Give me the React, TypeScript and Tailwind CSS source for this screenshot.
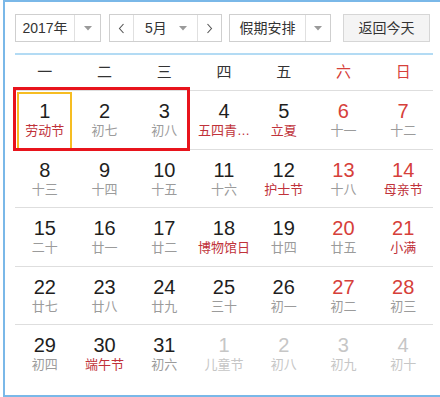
import React from "react";

const FONT = { fontFamily: '"Liberation Sans", Arial, "Noto Sans CJK SC", sans-serif' };

type Cell = { d: number; l: string; numRed?: boolean; lunarRed?: boolean; dim?: boolean };

const rows: Cell[][] = [
  [
    { d: 1, l: "劳动节", lunarRed: true },
    { d: 2, l: "初七" },
    { d: 3, l: "初八" },
    { d: 4, l: "五四青…", lunarRed: true },
    { d: 5, l: "立夏", lunarRed: true },
    { d: 6, l: "十一", numRed: true },
    { d: 7, l: "十二", numRed: true },
  ],
  [
    { d: 8, l: "十三" },
    { d: 9, l: "十四" },
    { d: 10, l: "十五" },
    { d: 11, l: "十六" },
    { d: 12, l: "护士节", lunarRed: true },
    { d: 13, l: "十八", numRed: true },
    { d: 14, l: "母亲节", numRed: true, lunarRed: true },
  ],
  [
    { d: 15, l: "二十" },
    { d: 16, l: "廿一" },
    { d: 17, l: "廿二" },
    { d: 18, l: "博物馆日", lunarRed: true },
    { d: 19, l: "廿四" },
    { d: 20, l: "廿五", numRed: true },
    { d: 21, l: "小满", numRed: true, lunarRed: true },
  ],
  [
    { d: 22, l: "廿七" },
    { d: 23, l: "廿八" },
    { d: 24, l: "廿九" },
    { d: 25, l: "三十" },
    { d: 26, l: "初一" },
    { d: 27, l: "初二", numRed: true },
    { d: 28, l: "初三", numRed: true },
  ],
  [
    { d: 29, l: "初四" },
    { d: 30, l: "端午节", lunarRed: true },
    { d: 31, l: "初六" },
    { d: 1, l: "儿童节", dim: true },
    { d: 2, l: "初八", dim: true },
    { d: 3, l: "初九", dim: true },
    { d: 4, l: "初十", dim: true },
  ],
];

const weekdays = ["一", "二", "三", "四", "五", "六", "日"];

function Caret() {
  return (
    <svg width="8" height="5" viewBox="0 0 8 5">
      <path d="M0 0 L8 0 L4 4.5 Z" fill="#9a9a9a" />
    </svg>
  );
}

function Chevron({ dir }: { dir: "l" | "r" }) {
  return (
    <svg width="7" height="11" viewBox="0 0 7 11">
      <polyline
        points={dir === "l" ? "5.5,1 1.5,5.5 5.5,10" : "1.5,1 5.5,5.5 1.5,10"}
        fill="none"
        stroke="#555"
        strokeWidth="1.1"
      />
    </svg>
  );
}

export default function App() {
  return (
    <div className="w-[440px] h-[397px] bg-white overflow-hidden relative" style={FONT}>
      <div className="ml-[3px] w-[450px] h-[397px] border-l-2 border-t-2 border-b-2 border-[#7ab8e8] pl-[10px] pt-[12px]">
        {/* Top bar */}
        <div className="flex items-center h-[28px] text-[14px] text-[#333]">
          <div className="flex w-[86px] h-[28px] border border-[#cfcfcf] bg-white">
            <div className="w-[59px] flex items-center justify-center border-r border-[#e0e0e0]">2017年</div>
            <div className="flex-1 flex items-center justify-center">
              <Caret />
            </div>
          </div>
          <div className="flex w-[113px] h-[28px] ml-[8px] border border-[#cfcfcf] bg-white">
            <div className="w-[24px] flex items-center justify-center border-r border-[#e0e0e0]">
              <Chevron dir="l" />
            </div>
            <div className="w-[64px] flex items-center border-r border-[#e0e0e0] pl-[11px] pr-[10px] justify-between">
              <span>5月</span>
              <Caret />
            </div>
            <div className="flex-1 flex items-center justify-center">
              <Chevron dir="r" />
            </div>
          </div>
          <div className="flex w-[102px] h-[28px] ml-[7px] border border-[#cfcfcf] bg-white">
            <div className="w-[76px] flex items-center justify-center border-r border-[#e0e0e0]">假期安排</div>
            <div className="flex-1 flex items-center justify-center">
              <Caret />
            </div>
          </div>
          <div className="w-[87px] h-[28px] ml-[12px] border border-[#d6d6d6] bg-[#f4f4f4] flex items-center justify-center">
            返回今天
          </div>
        </div>

        <div className="mt-[11px] w-[418px] h-[2px] bg-[#b3dbf4]" />

        {/* Weekday header */}
        <div className="grid grid-cols-7 w-[418px] h-[35px] items-center text-[15px]">
          {weekdays.map((w, i) => (
            <div key={w} className={`text-center ${i >= 5 ? "text-[#d6403a]" : "text-[#333]"}`}>
              {w}
            </div>
          ))}
        </div>

        {/* Rows */}
        <div className="relative w-[418px]">
          {rows.map((row, ri) => (
            <div key={ri} className="grid grid-cols-7 h-[58.6px] border-t border-[#dedede]">
              {row.map((c, ci) => {
                const numColor = c.dim ? "text-[#c6c6c6]" : c.numRed ? "text-[#d6403a]" : "text-[#1e1e1e]";
                const lunarColor = c.dim
                  ? "text-[#c6c6c6]"
                  : c.lunarRed
                  ? "text-[#c0323a]"
                  : "text-[#9b9b9b]";
                return (
                  <div key={ci} className="relative flex flex-col items-center pt-[9px]">
                    {ri === 0 && ci === 0 && (
                      <div className="absolute left-[2px] right-[3px] top-[1px] bottom-[-1px] border-2 border-[#f6bd22]" />
                    )}
                    <div className={`text-[20px] leading-[22px] ${numColor}`}>{c.d}</div>
                    <div className={`text-[13px] leading-[18px] whitespace-nowrap ${lunarColor}`}>{c.l}</div>
                  </div>
                );
              })}
            </div>
          ))}
          {/* red annotation box */}
          <div className="absolute left-[-2px] top-[-3px] w-[177px] h-[64px] border-[3px] border-[#e8141c] pointer-events-none" />
        </div>
      </div>
    </div>
  );
}
